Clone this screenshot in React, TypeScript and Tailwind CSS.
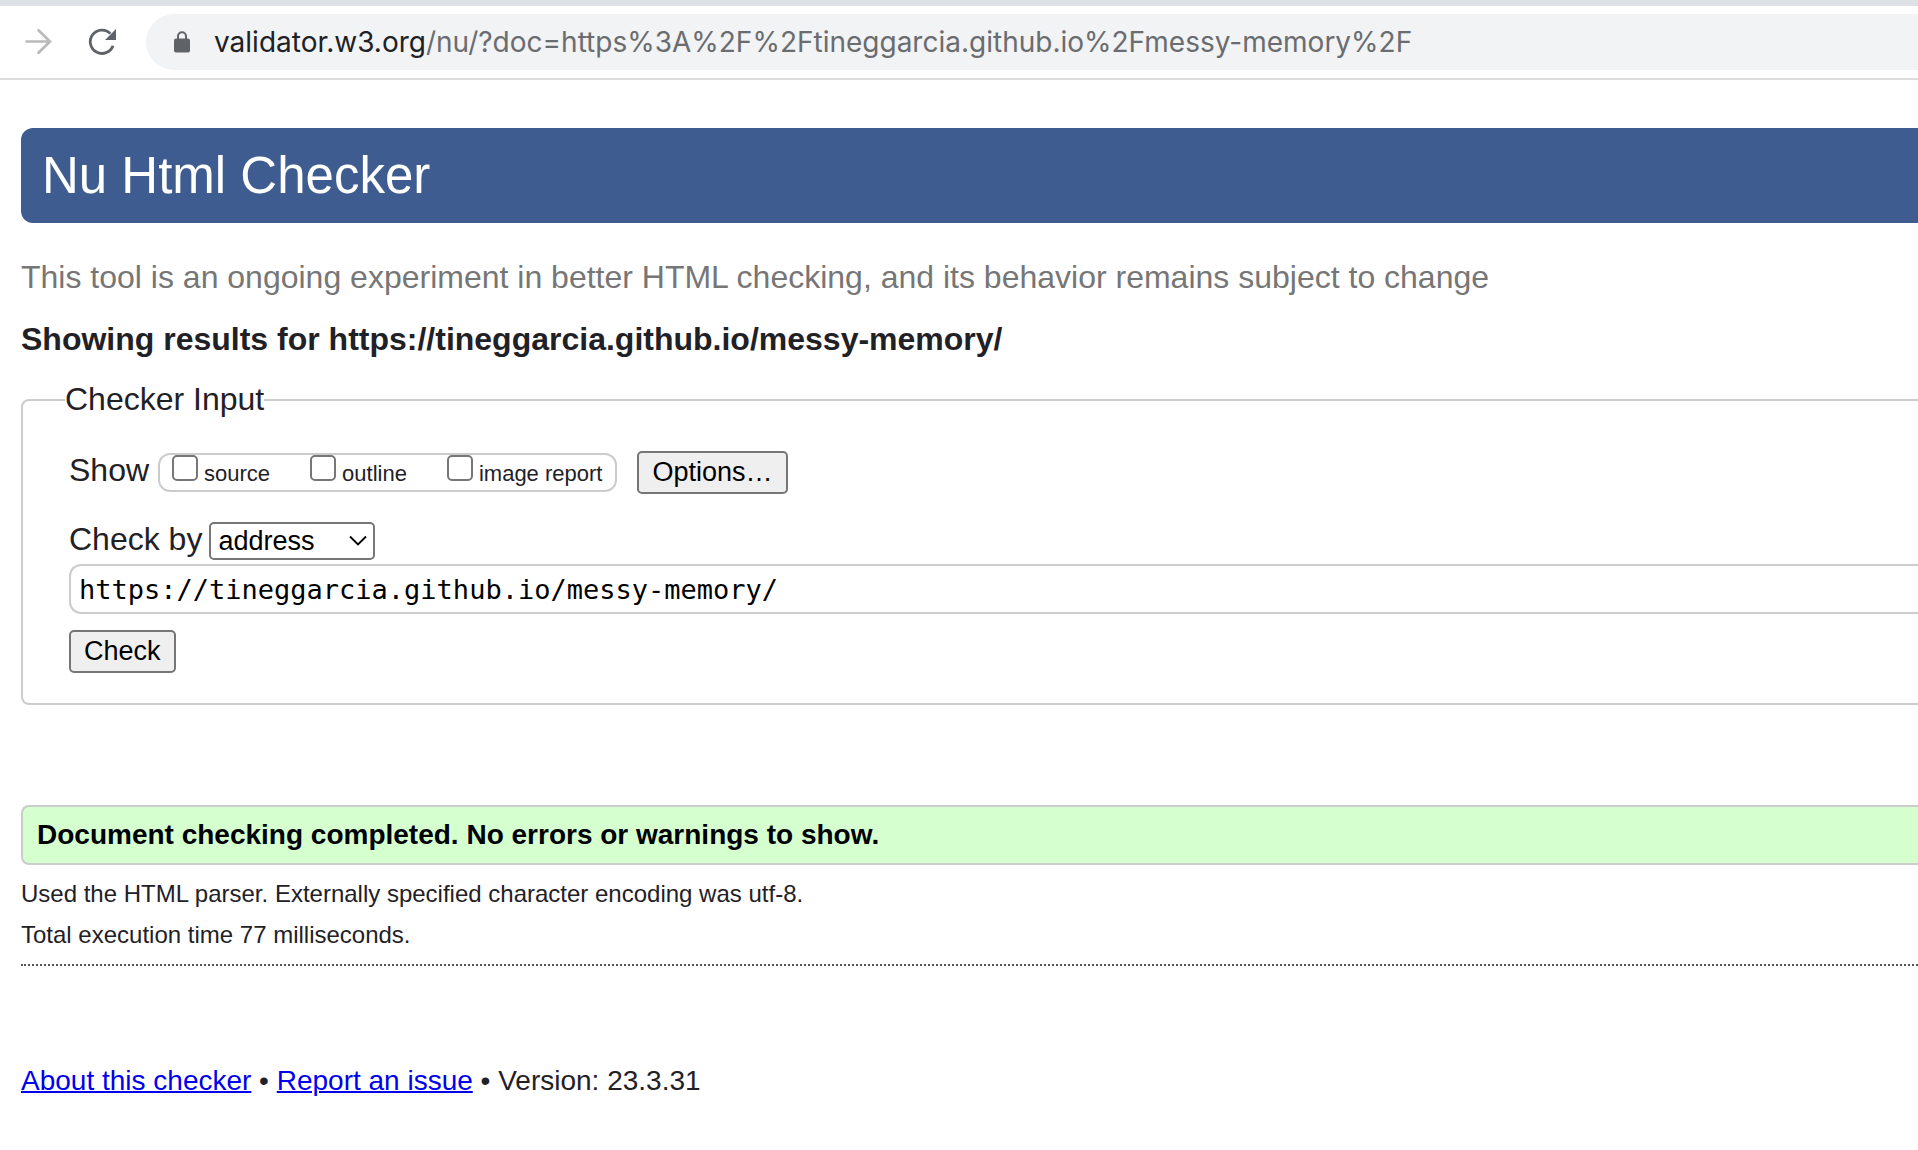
import React from "react";

const SANS = "font-['Liberation_Sans',Arial,sans-serif]";

function BrowserBar() {
  return (
    <header className="border-t-[6px] border-b-2 border-t-[#dee1e6] border-b-[#dcdcdc] bg-white">
      <div className="flex h-[72px] items-center">
        <button type="button" aria-label="Forward" className="ml-[22px] flex size-8 items-center justify-center">
          <svg viewBox="0 0 32 32" className="size-8" fill="none" stroke="#bababb" strokeWidth="2.7" strokeLinecap="round">
            <path d="M4.5 15.5H28M16.5 4.2L28 15.5L16.5 26.8" />
          </svg>
        </button>
        <button type="button" aria-label="Reload" className="ml-[33px] flex size-8 items-center justify-center">
          <svg viewBox="0 0 32 32" className="size-8">
            <path
              d="M26 19.7A11.7 11.7 0 1 1 23.4 7.6"
              fill="none"
              stroke="#5f6368"
              strokeWidth="2.8"
            />
            <path d="M29 3V14H18Z" fill="#5f6368" />
          </svg>
        </button>
        <div className="ml-[27px] flex h-14 flex-1 items-center rounded-l-full bg-[#f1f3f4] pl-7">
          <svg viewBox="0 0 16 22" className="h-[22px] w-4 shrink-0" aria-label="Secure connection" role="img">
            <rect x="0" y="7.5" width="16" height="14" rx="2" fill="#5f6368" />
            <path d="M4 8.5V5.2a4 4 0 0 1 8 0V8.5" fill="none" stroke="#5f6368" strokeWidth="2" />
          </svg>
          <div className="ml-6 font-[Inter,sans-serif] text-[28px] leading-8 whitespace-nowrap text-[#6a6c6f]">
            <span className="text-[#202124]">validator.w3.org</span>
            /nu/?doc=https%3A%2F%2Ftineggarcia.github.io%2Fmessy-memory%2F
          </div>
        </div>
      </div>
    </header>
  );
}

function ShowOption({ id, label }: { id: string; label: string }) {
  return (
    <label htmlFor={id} className="flex items-baseline gap-1.5 text-[22px] leading-[26px]">
      <input
        id={id}
        type="checkbox"
        className="size-[26px] shrink-0 appearance-none rounded-[5px] border-2 border-[#767676] bg-white checked:bg-[#0075ff]"
      />
      {label}
    </label>
  );
}

function PushButton({ children }: { children: React.ReactNode }) {
  return (
    <button
      type="button"
      className="rounded-[5px] border-2 border-[#767676] bg-[#efefef] px-[13px] py-1 text-[27px] leading-[31px] text-black"
    >
      {children}
    </button>
  );
}

function CheckerForm() {
  return (
    <fieldset className="mt-[22px] rounded-l-lg border-2 border-r-0 border-[#ccc] pb-[30px] pl-[42px]">
      <legend className="pb-0.5 text-[32px] leading-9">Checker Input</legend>
      <div className="pt-8 pl-1">
        <div className="flex items-baseline text-[32px] leading-8">
          <span>Show</span>
          <div className="ml-[9px] flex items-baseline gap-10 rounded-xl border-2 border-[#ccc] pr-[13px] pb-[3px] pl-3">
            <ShowOption id="showsource" label="source" />
            <ShowOption id="showoutline" label="outline" />
            <ShowOption id="showimagereport" label="image report" />
          </div>
          <div className="ml-5">
            <PushButton>Options…</PushButton>
          </div>
        </div>

        <div className="mt-7 flex items-baseline text-[32px] leading-8">
          <label htmlFor="docselect">Check by</label>
          <div className="relative ml-[7px]">
            <select
              id="docselect"
              defaultValue="address"
              className="h-[38px] w-[166px] appearance-none rounded-[5px] border-2 border-[#767676] bg-white pl-[7px] text-[27px] leading-8 text-black"
            >
              <option value="address">address</option>
              <option value="file">file upload</option>
              <option value="textarea">text input</option>
            </select>
            <svg
              viewBox="0 0 18 12"
              className="pointer-events-none absolute top-[13px] right-[8px] h-3 w-[18px]"
              fill="none"
              stroke="#000"
              strokeWidth="1.8"
            >
              <path d="M1 1.5L9 9.5L17 1.5" />
            </svg>
          </div>
        </div>

        <input
          type="text"
          aria-label="Address"
          defaultValue="https://tineggarcia.github.io/messy-memory/"
          className="mt-1 block h-[50px] w-full rounded-l-xl border-2 border-r-0 border-[#ccc] bg-white pl-2 font-['DejaVu_Sans_Mono',monospace] text-[27px] text-black"
        />
        <div className="mt-4 flex">
          <PushButton>Check</PushButton>
        </div>
      </div>
    </fieldset>
  );
}

export default function App() {
  return (
    <div className={`min-h-screen overflow-x-hidden bg-white text-[#1f2126] ${SANS}`}>
      <BrowserBar />
      <main className="pt-12 pl-[21px]">
        <h1 className="rounded-l-xl bg-[#3f5c91] pt-[18px] pb-[17px] pl-[21px] text-[51px] leading-[60px] text-white">
          Nu Html Checker
        </h1>
        <p className="mt-[34px] text-[32px] leading-10 text-[#767676]">
          This tool is an ongoing experiment in better HTML checking, and its behavior remains subject to change
        </p>
        <h2 className="mt-[22px] text-[32px] leading-10 font-bold">
          Showing results for https://tineggarcia.github.io/messy-memory/
        </h2>
        <CheckerForm />

        <p className="mt-[100px] rounded-l-lg border-2 border-r-0 border-[#ccc] bg-[#d6ffd0] py-3 pl-3.5 text-[28px] leading-8 font-bold text-black">
          Document checking completed. No errors or warnings to show.
        </p>
        <div className="mt-2 text-[24px] leading-[41px]">
          <p>Used the HTML parser. Externally specified character encoding was utf-8.</p>
          <p>Total execution time 77 milliseconds.</p>
        </div>
        <hr className="mt-[9px] border-t-2 border-dotted border-[#555]" />
        <footer className="mt-[99px] text-[28px] leading-8">
          <a href="#about" className="text-[#0000ee] underline decoration-2">
            About this checker
          </a>
          {" • "}
          <a href="#issues" className="text-[#0000ee] underline decoration-2">
            Report an issue
          </a>
          {" • Version: 23.3.31"}
        </footer>
      </main>
    </div>
  );
}
